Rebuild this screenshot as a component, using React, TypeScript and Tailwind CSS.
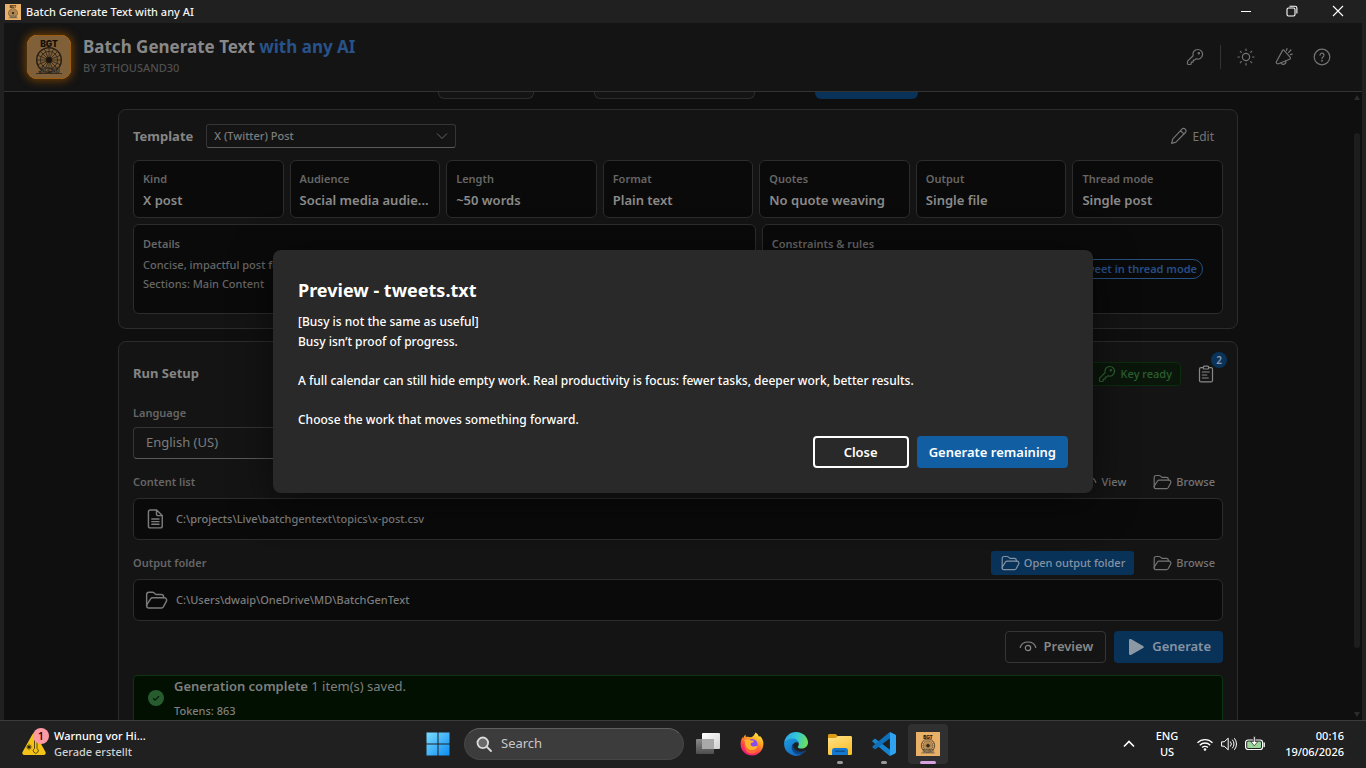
import React from 'react';

type IconProps = { className?: string };

const Stroke = ({ className = 'size-5', children }: IconProps & { children: React.ReactNode }) => (
  <svg viewBox="0 0 20 20" className={className} fill="none" stroke="currentColor" strokeWidth="1.2" strokeLinecap="round" strokeLinejoin="round" aria-hidden="true">
    {children}
  </svg>
);

const KeyIcon = ({ className }: IconProps) => (
  <Stroke className={className}>
    <path d="M12.7 2.5a4.8 4.8 0 0 0-4.6 6.2l-5.3 5.2a1 1 0 0 0-.3.7v1.900c0 .6.4 1 1 1h1.700c.6 0 1-.4 1-1v-1.300h1.200c.5 0 .9-.4.9-.9v-1.200h1.300l1.500-1.300A4.800 4.800 0 1 0 12.700 2.500Z" />
    <circle cx="13.8" cy="6.2" r=".6" fill="currentColor" />
  </Stroke>
);

const SunIcon = () => (
  <Stroke>
    <circle cx="10" cy="10" r="3.6" />
    <path d="M10 2v1.4M10 16.6V18M2 10h1.4M16.6 10H18M4.3 4.3l1 1M14.7 14.7l1 1M4.3 15.7l1-1M14.7 5.3l1-1" />
  </Stroke>
);

const MegaphoneIcon = () => (
  <Stroke>
    <path d="M8.6 3.4 2.4 14.8a1.2 1.2 0 0 0 .6 1.7l.6.2c.3.1.6.1.9 0l11.2-4.5c.8-.3 1-1.2.5-1.8L9.900 3.200a.8.8 0 0 0-1.300.2Z" />
    <path d="M7 15.8a2.4 2.4 0 0 0 4.6-1.900M12.500 3.400l.5-1.900M14.600 5.400l2.300-2.400M16.300 7.600l2-.5" />
  </Stroke>
);

const HelpIcon = () => (
  <Stroke>
    <circle cx="10" cy="10" r="7.8" />
    <path d="M8 8.2a2 2 0 1 1 3.2 1.600c-.7.5-1.200.9-1.200 1.800" />
    <circle cx="10" cy="13.7" r=".4" fill="currentColor" />
  </Stroke>
);

const PencilIcon = () => (
  <Stroke>
    <path d="M12.900 3.200a2.300 2.300 0 0 1 3.400 0 2.300 2.300 0 0 1 .1 3.300L7.200 15.900a2 2 0 0 1-.9.5l-3.700 1 1-3.800a2 2 0 0 1 .5-.9l8.800-9.500ZM11.600 4.700l3.600 3.400" />
  </Stroke>
);

const FolderIcon = ({ className }: IconProps) => (
  <Stroke className={className}>
    <path d="M2.200 15.200V5.400c0-1 .8-1.900 1.900-1.900h3c.4 0 .8.1 1.100.4L10 5.400h4.400c1 0 1.900.8 1.900 1.800V8" />
    <path d="M2.200 15.200c0 .8.6 1.400 1.500 1.400h11c.6 0 1.100-.3 1.400-.8l2.500-4.600c.7-1.300 0-3.100-1.600-3.100H7.200c-.7 0-1.300.3-1.700.9l-3 4.600c-.2.4-.3 1-.3 1.600Z" />
  </Stroke>
);

const DocIcon = () => (
  <Stroke className="size-6">
    <path d="M5.300 2.500h5.200l4.700 4.600v8.700c0 .9-.7 1.600-1.600 1.600H5.300c-.9 0-1.600-.7-1.600-1.600V4.100c0-.9.7-1.600 1.600-1.600ZM10.400 2.700V6c0 .7.5 1.200 1.200 1.200H15M6.500 10h6M6.500 12.200h6M6.500 14.400h6" />
  </Stroke>
);

const ClipboardIcon = () => (
  <Stroke>
    <path d="M7.400 3.600H5c-.8 0-1.500.7-1.500 1.500v11.300c0 .8.7 1.500 1.500 1.500h10c.8 0 1.500-.7 1.500-1.500V5.100c0-.8-.7-1.500-1.500-1.500h-2.400" />
    <rect x="7.2" y="2.2" width="5.6" height="2.8" rx="1.3" />
    <path d="M6.300 8h7M6.300 11h4.500M6.300 14h6" />
  </Stroke>
);

const EyeIcon = () => (
  <Stroke>
    <path d="M2.200 10.500C3.200 7 6.400 5 10 5s6.800 2 7.800 5.500" />
    <circle cx="10" cy="11" r="2.700" />
  </Stroke>
);

const BgtLogo = ({ className }: IconProps) => (
  <svg viewBox="0 0 44 44" className={className} aria-hidden="true">
    <rect width="44" height="44" fill="#e9b068" />
    <text x="22" y="12" textAnchor="middle" fontFamily="Inter, sans-serif" fontWeight="900" fontSize="8.500" fill="#2b1e10">BGT</text>
    <g fill="none" stroke="#4a3a28">
      <circle cx="22" cy="25" r="12.300" strokeWidth="1.500" />
      <circle cx="22" cy="25" r="8.600" strokeWidth=".8" />
      <path strokeWidth=".8" d="M22 13v24M10 25h24M13.500 16.500l17 17M30.500 16.500l-17 17M17.400 14l9.200 22M26.600 14l-9.200 22M11 20.400l22 9.200M33 20.400l-22 9.200" />
      <path strokeWidth=".8" d="M9 38.500h26" />
    </g>
    <circle cx="22" cy="25" r="3" fill="#33261a" />
    <text x="22" y="37.800" textAnchor="middle" fontFamily="Inter, sans-serif" fontWeight="700" fontSize="8" fill="#d8c4a4" stroke="#33261a" strokeWidth=".5">3030</text>
  </svg>
);

function TitleBar() {
  return (
    <header className="flex h-[23px] shrink-0 items-center bg-[#202020] pr-[5px] pl-[5px] text-[11px] font-medium text-[#f4f4f4]">
      <BgtLogo className="size-4" />
      <span className="ml-[5px] flex-1 pt-px">Batch Generate Text with any AI</span>
      <div className="flex h-full pb-[2px] text-white">
        <button aria-label="Minimize" className="flex w-[46px] items-center justify-center">
          <svg viewBox="0 0 12 12" className="size-3" stroke="currentColor"><path d="M1 6.500h10" /></svg>
        </button>
        <button aria-label="Restore" className="flex w-[46px] items-center justify-center">
          <svg viewBox="0 0 12 12" className="size-3" fill="none" stroke="currentColor" strokeWidth="1.100"><rect x="1" y="3" width="8" height="8" rx="1.500" /><path d="M3.500 1.200H9c1.100 0 1.900.8 1.900 1.900v5.400" /></svg>
        </button>
        <button aria-label="Close window" className="flex w-[46px] items-center justify-center">
          <svg viewBox="0 0 12 12" className="size-3" stroke="currentColor" strokeWidth="1.100"><path d="m1 1 10 10M11 1 1 11" /></svg>
        </button>
      </div>
    </header>
  );
}

function AppHeader() {
  return (
    <div className="flex h-[69px] shrink-0 items-center border-b border-[#333] bg-[#141414] pr-[22px] pl-[23px]">
      <div className="relative size-11 overflow-visible rounded-[10px] shadow-[0_0_8px_2px_#6b3c05]">
        <BgtLogo className="size-11 rounded-[10px]" />
        <div className="absolute inset-0 rounded-[10px] border border-[#9a5c10] bg-black/45" />
      </div>
      <div className="ml-3 flex-1 pb-[3px]">
        <h1 className="text-[17px] leading-[24px] font-bold text-[#888]">
          Batch Generate Text <span className="text-[#28528a]">with any AI</span>
        </h1>
        <p className="text-[11px] leading-[18px] font-medium text-[#4f4f4f]">BY 3THOUSAND30</p>
      </div>
      <div className="flex items-center text-[#747474]">
        <button aria-label="API keys" className="flex size-9 items-center justify-center"><KeyIcon className="size-5" /></button>
        <span className="mx-[7px] h-6 w-px bg-[#333]" />
        <div className="flex gap-[2px]">
          <button aria-label="Theme" className="flex size-9 items-center justify-center"><SunIcon /></button>
          <button aria-label="Announcements" className="flex size-9 items-center justify-center"><MegaphoneIcon /></button>
          <button aria-label="Help" className="flex size-9 items-center justify-center"><HelpIcon /></button>
        </div>
      </div>
    </div>
  );
}

const facts = [
  ['Kind', 'X post'],
  ['Audience', 'Social media audie...'],
  ['Length', '~50 words'],
  ['Format', 'Plain text'],
  ['Quotes', 'No quote weaving'],
  ['Output', 'Single file'],
  ['Thread mode', 'Single post'],
];

function TemplateCard() {
  return (
    <section className="rounded-lg border border-[#2c2c2c] bg-[#141414] p-[14px]">
      <div className="flex h-6 items-center">
        <label htmlFor="template" className="pt-px text-[13px] font-bold text-[#858585]">Template</label>
        <div className="relative ml-[13px] w-[250px]">
          <select id="template" className="block h-6 w-full appearance-none rounded-[3px] border border-[#353535] border-b-[#5a5a5a] bg-[#141414] px-[7px] text-[11px] font-medium text-[#7c7c7c]">
            <option>X (Twitter) Post</option>
          </select>
          <svg viewBox="0 0 12 12" className="pointer-events-none absolute top-[6px] right-2 size-3" fill="none" stroke="#666"><path d="m1 3.500 5 5 5-5" /></svg>
        </div>
        <button className="ml-auto flex items-center gap-1 pr-[9px] text-[12px] text-[#747474]"><PencilIcon /><span className="pt-px">Edit</span></button>
      </div>
      <dl className="mt-3 grid grid-cols-7 gap-[6px]">
        {facts.map(([label, value]) => (
          <div key={label} className="h-[58px] min-w-0 rounded-md border border-[#2c2c2c] bg-[#0a0a0a] px-[9px] pt-2">
            <dt className="text-[11px] leading-[20px] font-semibold text-[#666]">{label}</dt>
            <dd className="text-[13px] leading-[22px] font-semibold whitespace-nowrap text-[#8a8a8a]">{value}</dd>
          </div>
        ))}
      </dl>
      <div className="mt-[6px] grid h-[90px] grid-cols-[27fr_20fr] gap-[6px]">
        <div className="rounded-md border border-[#2c2c2c] bg-[#0a0a0a] px-[9px] pt-[9px] text-[#666]">
          <h3 className="text-[11px] leading-[20px] font-semibold">Details</h3>
          <p className="pt-px text-[11px] leading-[19px] font-medium">Concise, impactful post for X<br />Sections: Main Content</p>
        </div>
        <div className="rounded-md border border-[#2c2c2c] bg-[#0a0a0a] px-[9px] pt-[9px]">
          <h3 className="text-[11px] leading-[20px] font-semibold text-[#666]">Constraints &amp; rules</h3>
          <div className="flex justify-end pt-[5px] pr-[10px]">
            <span className="flex h-5 items-center rounded-full border border-[#26507f] px-[5px] pt-px text-[11px] font-semibold text-[#264e85]">Each tweet in thread mode</span>
          </div>
        </div>
      </div>
    </section>
  );
}

const ghost = 'flex h-6 items-center gap-1 text-[11px] font-medium text-[#747474]';
const field = 'mt-1 flex h-[42px] items-center gap-2 rounded-md border border-[#2c2c2c] bg-[#0a0a0a] px-[10px] text-[#7c7c7c]';
const fieldLabel = 'text-[11px] font-semibold text-[#666]';

function RunCard() {
  return (
    <section className="mt-3 rounded-lg border border-[#2c2c2c] bg-[#141414] p-[14px]">
      <div className="flex h-9 items-center">
        <h2 className="flex-1 text-[13px] font-bold text-[#858585]">Run Setup</h2>
        <span className="flex h-6 items-center gap-1 rounded border border-[#0c2c0e] bg-[#0b160b] px-[8px] text-[11px] font-medium text-[#2c5f30]"><KeyIcon className="size-5" /><span className="pt-px">Key ready</span></span>
        <button aria-label="Queue, 2 items" className="relative mr-[1px] ml-[9px] flex size-8 items-center justify-center text-[#888]">
          <ClipboardIcon />
          <span className="absolute -top-[6px] -right-[5px] flex size-4 items-center justify-center rounded-full bg-[#0a335a] text-[10px] font-semibold text-[#8a9aac]">2</span>
        </button>
      </div>
      <div className="mt-[11px] w-[358px]">
        <label htmlFor="language" className={'block leading-[20px] ' + fieldLabel}>Language</label>
        <select id="language" className="mt-1 block h-8 w-full appearance-none rounded border border-[#353535] border-b-[#5a5a5a] bg-[#141414] px-3 text-[13px] text-[#7c7c7c]">
          <option>English (US)</option>
        </select>
      </div>
      <div className="mt-[11px] flex h-6 items-center justify-between">
        <label htmlFor="content" className={fieldLabel}>Content list</label>
        <div className="flex gap-[26px] pr-2">
          <button className={ghost}><EyeIcon />View</button>
          <button className={ghost}><FolderIcon />Browse</button>
        </div>
      </div>
      <div className={field}>
        <DocIcon />
        <input id="content" readOnly value={'C:\\projects\\Live\\batchgentext\\topics\\x-post.csv'} className="min-w-0 flex-1 bg-transparent text-[11px] font-medium outline-none" />
      </div>
      <div className="mt-[11px] flex h-6 items-center justify-between">
        <label htmlFor="output" className={fieldLabel}>Output folder</label>
        <div className="flex gap-[18px] pr-2">
          <button className="flex h-6 items-center gap-1 rounded-[3px] bg-[#093258] px-[9px] text-[11px] font-medium text-[#8593a3]"><FolderIcon />Open output folder</button>
          <button className={ghost}><FolderIcon />Browse</button>
        </div>
      </div>
      <div className={field}>
        <FolderIcon className="size-6" />
        <input id="output" readOnly value={'C:\\Users\\dwaip\\OneDrive\\MD\\BatchGenText'} className="min-w-0 flex-1 bg-transparent text-[11px] font-medium outline-none" />
      </div>
      <div className="mt-[10px] flex justify-end gap-2 text-[13px] font-semibold">
        <button className="flex h-8 items-center gap-[6px] rounded border border-[#353535] px-3 text-[#878787]"><EyeIcon />Preview</button>
        <button className="flex h-8 items-center gap-[6px] rounded bg-[#093258] px-3 text-[#8593a3]">
          <svg viewBox="0 0 20 20" className="size-5" fill="#8d98a5"><path d="M3 3.200c0-1 1-1.600 1.900-1.100l12.200 6.800c.9.500.9 1.700 0 2.200L4.900 17.900A1.300 1.300 0 0 1 3 16.800V3.200Z" /></svg>
          Generate
        </button>
      </div>
      <div role="status" className="mt-3 flex h-[60px] gap-2 rounded border border-[#0e3510] bg-[#021002] px-3">
        <svg viewBox="0 0 20 20" className="mt-3 size-5"><circle cx="10" cy="10" r="8" fill="#265c2e" /><path d="m7 10.200 2 2 4-4.100" fill="none" stroke="#04140a" strokeWidth="1.200" /></svg>
        <div className="text-[#7f7f7f]">
          <p className="text-[13px] leading-[20px]"><b className="font-semibold">Generation complete</b> 1 item(s) saved.</p>
          <p className="mt-[5px] text-[11px] leading-[20px] font-medium">Tokens: 863</p>
        </div>
      </div>
    </section>
  );
}

function PreviewDialog() {
  return (
    <div className="absolute inset-0 flex items-center justify-center">
      <div role="dialog" aria-labelledby="preview-title" className="w-[820px] max-w-full rounded-lg bg-[#292929] p-[25px] text-white shadow-[0_8px_40px_rgba(0,0,0,0.5)]">
        <h2 id="preview-title" className="text-[18px] leading-[30px] font-bold">Preview - tweets.txt</h2>
        <div className="mt-[7px] space-y-[19px] text-[12px] leading-[20px] font-medium">
          <p>[Busy is not the same as useful]<br />Busy isn’t proof of progress.</p>
          <p>A full calendar can still hide empty work. Real productivity is focus: fewer tasks, deeper work, better results.</p>
          <p>Choose the work that moves something forward.</p>
        </div>
        <div className="mt-[6px] flex justify-end gap-2 text-[13px] font-semibold">
          <button className="h-8 w-24 rounded border-2 border-white pt-px">Close</button>
          <button className="h-8 rounded bg-[#115ea3] px-3 pt-px">Generate remaining</button>
        </div>
      </div>
    </div>
  );
}

const Slot = ({ label, children, active = false, running = false }: { label: string; children: React.ReactNode; active?: boolean; running?: boolean }) => (
  <button aria-label={label} className="relative flex h-[46px] w-11 items-center justify-center">
    {active && <span className="absolute inset-x-[2px] inset-y-[3px] rounded bg-[#303030]" />}
    <span className="relative">{children}</span>
    {running && <span className="absolute bottom-[3px] h-[3px] w-[6px] rounded-full bg-[#9a9a9a]" />}
    {active && <span className="absolute bottom-[3px] h-[3px] w-4 rounded-full bg-[#d7a0e0]" />}
  </button>
);

function Taskbar() {
  return (
    <footer className="grid h-12 shrink-0 grid-cols-[1fr_auto_1fr] items-center border-t border-[#3b3b3b] bg-[#202020] pb-px text-[11px] font-medium text-white">
      <button className="flex items-center pl-[21px] text-left">
        <span className="relative">
          <svg viewBox="0 0 26 26" className="size-[26px]">
            <path d="M11.300 3.400a2 2 0 0 1 3.500 0l9.700 17.500c.7 1.300-.2 3.100-1.800 3.100H3.300c-1.600 0-2.500-1.800-1.800-3.100Z" fill="#f3c318" />
            <g stroke="#4a3a0c" fill="none"><path d="M8 12.800v6.400M4.800 16h6.400M5.800 13.800l4.400 4.400M10.200 13.800l-4.400 4.400" strokeWidth=".7" /><path d="M13.500 17.500V9.500H16v8a2.500 2.500 0 1 1-2.500 0Z" strokeWidth=".9" /></g>
            <circle cx="8" cy="16" r="1.600" fill="#30260a" />
          </svg>
          <span className="absolute -top-[3px] -right-[2px] flex size-4 items-center justify-center rounded-full bg-[#ff99a4] text-[11px] text-black">1</span>
        </span>
        <span className="ml-[7px] leading-[16px]">Warnung vor Hi...<br /><span className="text-[#cfcfcf]">Gerade erstellt</span></span>
      </button>

      <nav className="flex items-center">
        <Slot label="Start">
          <svg viewBox="0 0 24 24" className="size-6">
            <defs><linearGradient id="win" x1="0" y1="0" x2="1" y2="1"><stop stopColor="#7bdcff" /><stop offset="1" stopColor="#0d8df0" /></linearGradient></defs>
            <path fill="url(#win)" d="M.5.5h11v11H.5ZM12.500.5h11v11h-11ZM.5 12.500h11v11H.5ZM12.500 12.500h11v11h-11Z" />
          </svg>
        </Slot>
        <label className="mr-[2px] ml-1 flex h-8 w-[220px] items-center gap-[9px] rounded-full border border-[#454545] border-t-[#606060] bg-[#3c3c3c] pl-[11px]">
          <svg viewBox="0 0 16 16" className="size-4" fill="none" stroke="#dcdcdc" strokeWidth="1.800" strokeLinecap="round"><circle cx="6.800" cy="6.800" r="5.300" fill="#6a6a6a" /><path d="m11 11 4 4" /></svg>
          <input aria-label="Search" placeholder="Search" className="w-32 bg-transparent text-[13px] font-normal outline-none placeholder:text-[#c8c8c8]" />
        </label>
        <Slot label="Task view">
          <svg viewBox="0 0 24 24" className="size-6">
            <defs><linearGradient id="tv" x1="0" y1="0" x2="1" y2="1"><stop stopColor="#fff" /><stop offset="1" stopColor="#d0d0d0" /></linearGradient><linearGradient id="tv2" x1="0" y1="0" x2="0" y2="1"><stop stopColor="#8a8a8a" /><stop offset="1" stopColor="#4d4d4d" /></linearGradient></defs>
            <rect x="6" y="1" width="18" height="16" rx="1" fill="url(#tv)" /><rect x="0" y="7" width="18" height="15" rx="1" fill="url(#tv2)" /><path d="M6 7h12v10H6Z" fill="#a9a9a9" />
          </svg>
        </Slot>
        <Slot label="Firefox">
          <svg viewBox="0 0 24 24" className="size-6">
            <defs><linearGradient id="ff" x1=".8" y1="0" x2=".25" y2="1"><stop stopColor="#fff04a" /><stop offset=".35" stopColor="#ffa51f" /><stop offset=".7" stopColor="#ff3d4d" /><stop offset="1" stopColor="#e6138e" /></linearGradient></defs>
            <path fill="url(#ff)" d="M15.500.5c2 1.300 3 2.800 3.500 4.300l1-.9c2.300 2.300 3.500 5 3.400 8.300-.2 6.200-5.200 11.300-11.400 11.300S.6 18.500.6 12.400C.6 9.400 1.400 7 2.700 5l.5 1.300C3.800 4.500 4.600 3.200 5.500 2.500l.3 2.600c1.500-.5 3.200-.4 4.500.2 2.200-.2 3.900-1.700 5.200-4.800Z" />
            <circle cx="12" cy="12.500" r="5.600" fill="#8a4bf0" />
            <path fill="#ffb52b" d="M4.500 8c2-1.200 4.800-1.200 6.500.5l3 .3c-.3 1.600-2 2-3.200 2.300-.8 2.300.8 3.700 2.700 3.500 1.700-.1 3-.9 4.300-.3-1 2.800-3.200 4-5.600 4-4.200 0-7.400-3.500-7.200-6.800Z" />
            <path fill="#ff6a33" d="M4.600 9.500c0 5 3.300 8.800 7.600 8.800 3 0 5-1.500 6-4.500 1 4.200-2 8-6.200 8-5 0-8.600-4.500-7.400-12.300Z" />
          </svg>
        </Slot>
        <Slot label="Edge">
          <svg viewBox="0 0 24 24" className="size-6">
            <defs>
              <linearGradient id="e1" x1="0" y1=".3" x2="1" y2=".5"><stop stopColor="#2ba4e6" /><stop offset=".5" stopColor="#33c7d8" /><stop offset="1" stopColor="#6fdf59" /></linearGradient>
              <linearGradient id="e2" x1="0" y1="0" x2=".8" y2="1"><stop stopColor="#1b9de2" /><stop offset="1" stopColor="#1464bd" /></linearGradient>
            </defs>
            <path fill="url(#e1)" d="M.1 11C.7 4.800 5.700 0 12 0c7.200 0 12 5.300 12 10.600 0 3.600-2.800 6-6 6-2.600 0-4.200-.8-4.200-1.700 0-.6 1-1 1-2.900C14.800 9.600 12.200 7.500 9 7.500 4.800 7.500 1.500 9.200.1 11Z" />
            <path fill="url(#e2)" d="M.1 11C1.400 8.300 4.800 6.500 9 6.500c3.300 0 5.800 2.500 5.800 5.300-1-1.400-2.600-1.800-4-1.100-2.200 1-3 3.600-2.200 6 1.400 4 6 6.300 10.700 4.600A12 12 0 0 1 .1 11Z" />
            <path fill="#0e4584" d="M8.600 11.900c-1.700 2.600-1 6.500 1.700 8.800 2.800 2.300 7.300 2.200 11-1 .6-.6 1-1.400.5-1.200-4.600 2.200-9.500 1-11.400-1.700-1.100-1.600-1.300-3.400-1.800-4.900Z" />
          </svg>
        </Slot>
        <Slot label="File Explorer" running>
          <svg viewBox="0 0 24 24" className="size-6">
            <defs><linearGradient id="fo" x1="0" y1="0" x2=".6" y2="1"><stop stopColor="#ffe28a" /><stop offset="1" stopColor="#fbc02d" /></linearGradient></defs>
            <path fill="#dd9a12" d="M0 3.500C0 2.700.6 2 1.400 2h5.800c.5 0 .9.200 1.200.5L10.500 5v4H0Z" />
            <path fill="url(#fo)" d="M0 6h7.500L10 4h12.600c.8 0 1.400.6 1.400 1.400V21.500c0 .8-.6 1.500-1.400 1.500H1.400C.6 23 0 22.300 0 21.500Z" />
            <path fill="#1577cf" d="M4 18.500C4 17 5 16 6.500 16h11c1.500 0 2.500 1 2.500 2.500V23H4Z" /><path fill="#0b5090" d="M7 18.500h10v1.500H7Z" />
          </svg>
        </Slot>
        <Slot label="Visual Studio Code" running>
          <svg viewBox="0 0 24 24" className="size-6">
            <path fill="#1683cf" d="M.6 8.500 2.300 7c.4-.4 1-.4 1.400-.1L18 17.800v5.700c-.4.200-.8 0-1.200-.3L.6 9.800a.9.900 0 0 1 0-1.300Z" />
            <path fill="#0f6fb8" d="M.6 15.500 2.300 17c.4.400 1 .4 1.400.1L18 6.200V.5c-.4-.2-.8 0-1.200.3L.6 14.200a.9.900 0 0 0 0 1.300Z" />
            <path fill="#2fa3f0" d="M17.300.3a1.400 1.400 0 0 1 1.200 0l4.700 2.300c.5.300.8.700.8 1.300v16.200c0 .6-.3 1-.8 1.300l-4.700 2.300a1.400 1.400 0 0 1-1.600-.3c.5.500 1 .2 1-.6V1.200c0-.8-.5-1.100-.6-.9Z" />
          </svg>
        </Slot>
        <Slot label="Batch Generate Text" active><BgtLogo className="size-6" /></Slot>
      </nav>

      <div className="flex items-center justify-end pr-[22px] text-center leading-[16px]">
        <button aria-label="Hidden icons" className="flex"><svg viewBox="0 0 12 12" className="size-3" fill="none" stroke="currentColor" strokeWidth="1.600"><path d="m1 8.500 5-5 5 5" /></svg></button>
        <button className="ml-5 w-6 whitespace-nowrap">ENG<br />US</button>
        <button aria-label="Network, volume and battery" className="ml-[18px] flex items-center gap-2">
          <svg viewBox="0 0 16 16" className="size-4" fill="none" stroke="currentColor" strokeWidth="1.300"><path d="M.5 6.800a10.500 10.500 0 0 1 15 0M2.800 9.200a7.300 7.300 0 0 1 10.400 0M5.100 11.500a4.100 4.100 0 0 1 5.800 0" /><circle cx="8" cy="13.500" r="1.300" fill="currentColor" stroke="none" /></svg>
          <svg viewBox="0 0 16 16" className="size-4" fill="none" stroke="currentColor" strokeLinejoin="round"><path d="M.6 5.800h2.600l4-3.600v11.600l-4-3.600H.6ZM9.300 5.500a3.800 3.800 0 0 1 0 5M11.300 3.700a6.400 6.400 0 0 1 0 8.600M13.300 2.200a8.800 8.800 0 0 1 0 11.600" /></svg>
          <svg viewBox="0 0 20 16" className="h-4 w-5" fill="none"><rect x=".6" y="4" width="17" height="9.500" rx="2.500" stroke="#fff" strokeWidth="1.200" /><rect x="2.200" y="5.600" width="13.800" height="6.300" rx="1" fill="#9ad69a" /><path d="M19.200 7v3.500" stroke="#fff" strokeWidth="1.300" strokeLinecap="round" /><path d="M8.400.5h1.800v5h2.600L9.300 9.800 5.800 5.500h2.600Z" fill="#fff" stroke="#202020" strokeWidth=".7" /></svg>
        </button>
        <button className="w-[79px] text-right">00:16<br />19/06/2026</button>
      </div>
    </footer>
  );
}

export default function App() {
  return (
    <div className="flex h-screen flex-col overflow-hidden bg-[#202020] font-['Noto_Sans','Open_Sans',sans-serif]">
      <TitleBar />
      <div className="relative mx-1 flex min-h-0 flex-1 flex-col bg-[#0f0f0f]">
        <AppHeader />
        <div className="flex min-h-0 flex-1">
          <main className="min-w-0 flex-1 overflow-hidden px-4">
            <div className="mx-auto max-w-[1120px]">
              <div className="mb-[10px] flex h-[7px] justify-center gap-[60px]">
                <span className="w-24 rounded-b-md border border-t-0 border-[#2c2c2c] bg-[#141414]" />
                <span className="w-[161px] rounded-b-md border border-t-0 border-[#2c2c2c] bg-[#141414]" />
                <span className="w-[103px] rounded-b-md bg-[#093258]" />
              </div>
              <TemplateCard />
              <RunCard />
            </div>
          </main>
          <div className="flex w-[10px] flex-col items-center justify-between py-[3px]">
            <svg viewBox="0 0 6 5" className="h-[5px] w-[6px]" fill="#2c2c2c"><path d="M3 0l3 5H0Z" /></svg>
            <span className="mt-[33px] mb-16 w-[6px] flex-1 rounded-full bg-[#1d1d1d]" />
            <svg viewBox="0 0 6 5" className="h-[5px] w-[6px]" fill="#2c2c2c"><path d="M3 5l3-5H0Z" /></svg>
          </div>
        </div>
        <PreviewDialog />
      </div>
      <Taskbar />
    </div>
  );
}
